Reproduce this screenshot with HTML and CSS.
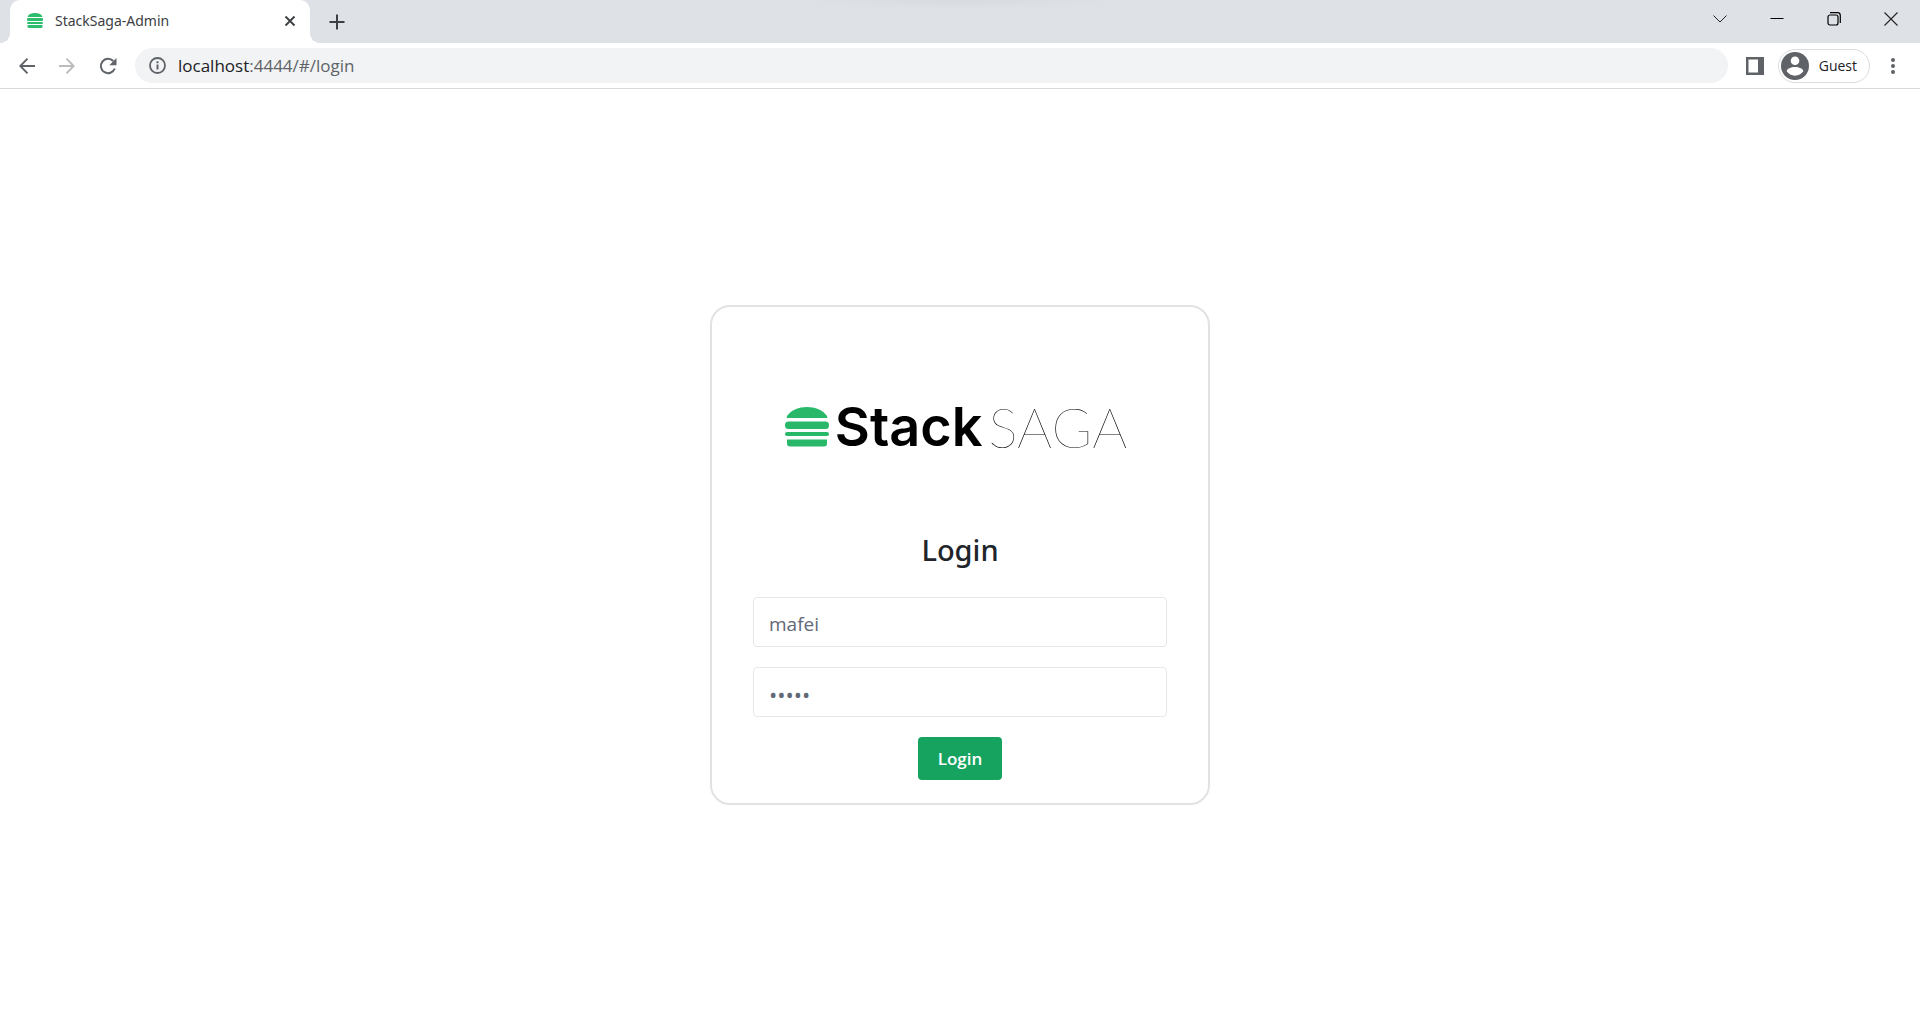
FILE: index.html
```html
<!DOCTYPE html>
<html lang="en">
<head>
<meta charset="utf-8">
<title>StackSaga-Admin</title>
<link rel="stylesheet" href="styles.css">
</head>
<body>
<svg class="defs" aria-hidden="true">
  <symbol id="burger" viewBox="0 0 44 40">
    <path d="M2 9C6 3 14 0 22 0s16 3 20 9c1 2 0 2-1 2H3c-1 0-2 0-1-2Z"/>
    <rect x="0" y="14.500" width="44" height="7.500" rx="3.500"/>
    <rect x="0" y="25" width="44" height="4" rx="2"/>
    <path d="M2 32.500h40v4a3 3 0 0 1-3 3H5a3 3 0 0 1-3-3Z"/>
  </symbol>
  <symbol id="burger-small" viewBox="0 0 16 15">
    <path d="M.500 4C1.500 1 4 0 8 0s6.500 1 7.500 4Z"/>
    <rect y="5" width="16" height="3" rx="1"/>
    <rect y="9" width="16" height="2" rx="1"/>
    <path d="M.500 12h15v1.500a1.500 1.500 0 0 1-1.500 1.500H2a1.500 1.500 0 0 1-1.500-1.500Z"/>
  </symbol>
</svg>
<header class="browser">
  <div class="tabstrip">
    <div class="tab">
      <svg class="favicon" width="16" height="15"><use href="#burger-small"/></svg>
      <span class="tab-title">StackSaga-Admin</span>
      <button class="icon-button" aria-label="Close tab"><svg width="16" height="16" viewBox="0 0 16 16"><path d="M3.500 3.500l9 9M12.500 3.500l-9 9" stroke="#3c4043" stroke-width="1.900"/></svg></button>
    </div>
    <button class="icon-button new-tab" aria-label="New tab"><svg width="16" height="16" viewBox="0 0 16 16"><path d="M8 .500v15M.500 8h15" stroke="#3c4043" stroke-width="2"/></svg></button>
    <div class="window-controls">
      <button class="icon-button" aria-label="Search tabs"><svg width="14" height="14" viewBox="0 0 14 14"><path d="M.500 3.500l6.500 6.500 6.500-6.500" stroke="#222"/></svg></button>
      <button class="icon-button" aria-label="Minimize"><svg width="14" height="14" viewBox="0 0 14 14"><path d="M.500 6.500h13" stroke="#000"/></svg></button>
      <button class="icon-button" aria-label="Restore"><svg width="14" height="14" viewBox="0 0 14 14"><rect x="1" y="3" width="10" height="10" rx="2" stroke="#000" stroke-width="1.200"/><path d="M3 .700h7.500a2.800 2.800 0 0 1 2.800 2.800V11" stroke="#000" stroke-width="1.200"/></svg></button>
      <button class="icon-button" aria-label="Close"><svg width="14" height="14" viewBox="0 0 14 14"><path d="M.500.500l13 13M13.500.500l-13 13" stroke="#222" stroke-width="1.100"/></svg></button>
    </div>
  </div>
  <div class="toolbar">
    <div class="nav">
      <button class="icon-button" aria-label="Back"><svg width="16" height="16" viewBox="0 0 16 16"><path d="M16 8H1.500M8.500.700L1.300 8l7.200 7.300" stroke="#5f6368" stroke-width="1.900"/></svg></button>
      <button class="icon-button" aria-label="Forward" disabled><svg width="16" height="16" viewBox="0 0 16 16"><path d="M0 8h14.500M7.500.700L14.700 8l-7.200 7.300" stroke="#babcbe" stroke-width="1.900"/></svg></button>
      <button class="icon-button" aria-label="Reload"><svg width="18" height="18" viewBox="0 0 18 18"><path d="M15.800 11.500A7.200 7.200 0 1 1 14.300 4" stroke="#5f6368" stroke-width="2"/><path d="M17.500 1v7.200h-7.200Z" fill="#5f6368"/></svg></button>
    </div>
    <div class="omnibox">
      <svg width="17" height="17" viewBox="0 0 17 17" fill="none"><circle cx="8.500" cy="8.500" r="7.500" stroke="#5f6368" stroke-width="1.800"/><path d="M8.500 7.500v5M8.500 4.300v2" stroke="#5f6368" stroke-width="2"/></svg>
      <span class="url"><span class="host">localhost</span>:4444/#/login</span>
    </div>
    <button class="icon-button" aria-label="Side panel"><svg width="18" height="18" viewBox="0 0 18 18"><path fill="#5f6368" fill-rule="evenodd" d="M0 0h18v18H0ZM2.500 2.500v13H12v-13Z"/></svg></button>
    <button class="profile">
      <svg width="28" height="28" viewBox="0 0 28 28"><circle cx="14" cy="14" r="14" fill="#5f6368"/><circle cx="14" cy="8.700" r="4.300" fill="#fff"/><path d="M14 15c4 0 8.300 1.800 8.300 4.300C20.500 22 17.500 23.700 14 23.700S7.500 22 5.700 19.300C5.700 16.800 10 15 14 15Z" fill="#fff"/></svg>
      <span>Guest</span>
    </button>
    <button class="icon-button menu" aria-label="Menu"><svg width="4" height="16" viewBox="0 0 4 16" fill="#5f6368"><circle cx="2" cy="2" r="2"/><circle cx="2" cy="8" r="2"/><circle cx="2" cy="14" r="2"/></svg></button>
  </div>
</header>
<main class="page">
  <form class="card">
    <div class="logo">
      <svg class="logo-mark" width="44" height="40"><use href="#burger"/></svg>
      <span class="logo-stack">Stack</span>
      <span class="logo-saga">SAGA</span>
    </div>
    <h1 class="heading">Login</h1>
    <input class="field" type="text" value="mafei" aria-label="Username">
    <input class="field password" type="password" value="admin" aria-label="Password">
    <button class="submit" type="button">Login</button>
  </form>
</main>
</body>
</html>
```
FILE: styles.css
```css
* { box-sizing: border-box; }
body {
  margin: 0;
  min-height: 100vh;
  display: flex;
  flex-direction: column;
  background: #fff;
  font-family: "Open Sans", "Noto Sans", sans-serif;
}
button, input { font-family: inherit; }
svg { display: block; flex: none; }
.defs { display: none; }

.icon-button {
  display: flex;
  padding: 0;
  border: 0;
  background: none;
}
.icon-button svg { fill: none; }
.icon-button.menu svg { fill: #5f6368; }

.tabstrip {
  display: flex;
  height: 43px;
  padding-left: 10px;
  background: radial-gradient(160px 10px at 50% 0, #d7dadf, #dee1e6);
}
.tab {
  position: relative;
  display: flex;
  align-items: center;
  gap: 12px;
  width: 300px;
  padding: 0 12px 2px 17px;
  border-radius: 10px 10px 0 0;
  background: #fff;
}
.tab::before, .tab::after {
  content: "";
  position: absolute;
  bottom: 0;
  width: 10px;
  height: 10px;
}
.tab::before {
  right: 100%;
  background: radial-gradient(circle at 0 0, transparent 10px, #fff 10px);
}
.tab::after {
  left: 100%;
  background: radial-gradient(circle at 100% 0, transparent 10px, #fff 10px);
}
.favicon { fill: #2dbd6e; }
.tab-title {
  flex: 1;
  font-family: "Noto Sans", sans-serif;
  font-size: 14px;
  color: #3c4043;
}
.new-tab {
  align-items: center;
  margin-left: 19px;
}
.window-controls {
  display: flex;
  align-items: flex-start;
  gap: 43px;
  margin-left: auto;
  padding: 12px 22px 0 0;
}

.toolbar {
  display: flex;
  align-items: center;
  height: 46px;
  padding: 0 25px 0 19px;
  border-bottom: 1px solid #d9dadc;
}
.nav {
  display: flex;
  align-items: center;
  gap: 24px;
}
.omnibox {
  flex: 1;
  display: flex;
  align-items: center;
  gap: 12px;
  height: 35px;
  margin: 0 18px;
  padding: 0 14px;
  border-radius: 18px;
  background: #f1f3f4;
}
.url {
  font-size: 17px;
  color: #5f6368;
}
.host { color: #202124; }
.profile {
  display: flex;
  align-items: center;
  gap: 10px;
  height: 34px;
  margin: 0 21px 0 14px;
  padding: 0 12px 0 2px;
  border: 1px solid #dadce0;
  border-radius: 17px;
  background: #fff;
  font-size: 14px;
  color: #202124;
}

.page {
  flex: 1;
  display: grid;
  place-items: center;
  padding: 4px 16px 0;
}
.card {
  display: flex;
  flex-direction: column;
  align-items: center;
  gap: 20px;
  width: 100%;
  max-width: 500px;
  padding: 86px 41px 23px;
  border: 2px solid #e2e2e2;
  border-radius: 20px;
}
.logo {
  display: flex;
  align-items: center;
  gap: 6px;
  height: 68px;
  margin: 0 8px 44px 0;
  line-height: 68px;
}
.logo-mark { fill: #29b86a; }
.logo-stack {
  font-family: Inter, sans-serif;
  font-size: 54px;
  font-weight: 600;
  color: #000;
}
.logo-saga {
  font-family: Lato, sans-serif;
  font-size: 55px;
  font-weight: 100;
  color: #000;
}
.heading {
  margin: 0;
  font-family: "Noto Sans", sans-serif;
  font-size: 29px;
  font-weight: 500;
  line-height: 50px;
  padding-bottom: 2px;
  color: #212529;
}
.field {
  width: 100%;
  height: 50px;
  padding: 4px 15px 0;
  border: 1px solid #e6e7e9;
  border-radius: 4px;
  background: #fff;
  font-size: 19px;
  color: #616876;
}
.field.password { font-size: 22px; }
.submit {
  height: 43px;
  padding: 0 20px;
  border: 0;
  border-radius: 4px;
  background: #16a360;
  font-size: 17px;
  font-weight: 600;
  color: #fff;
}
```
